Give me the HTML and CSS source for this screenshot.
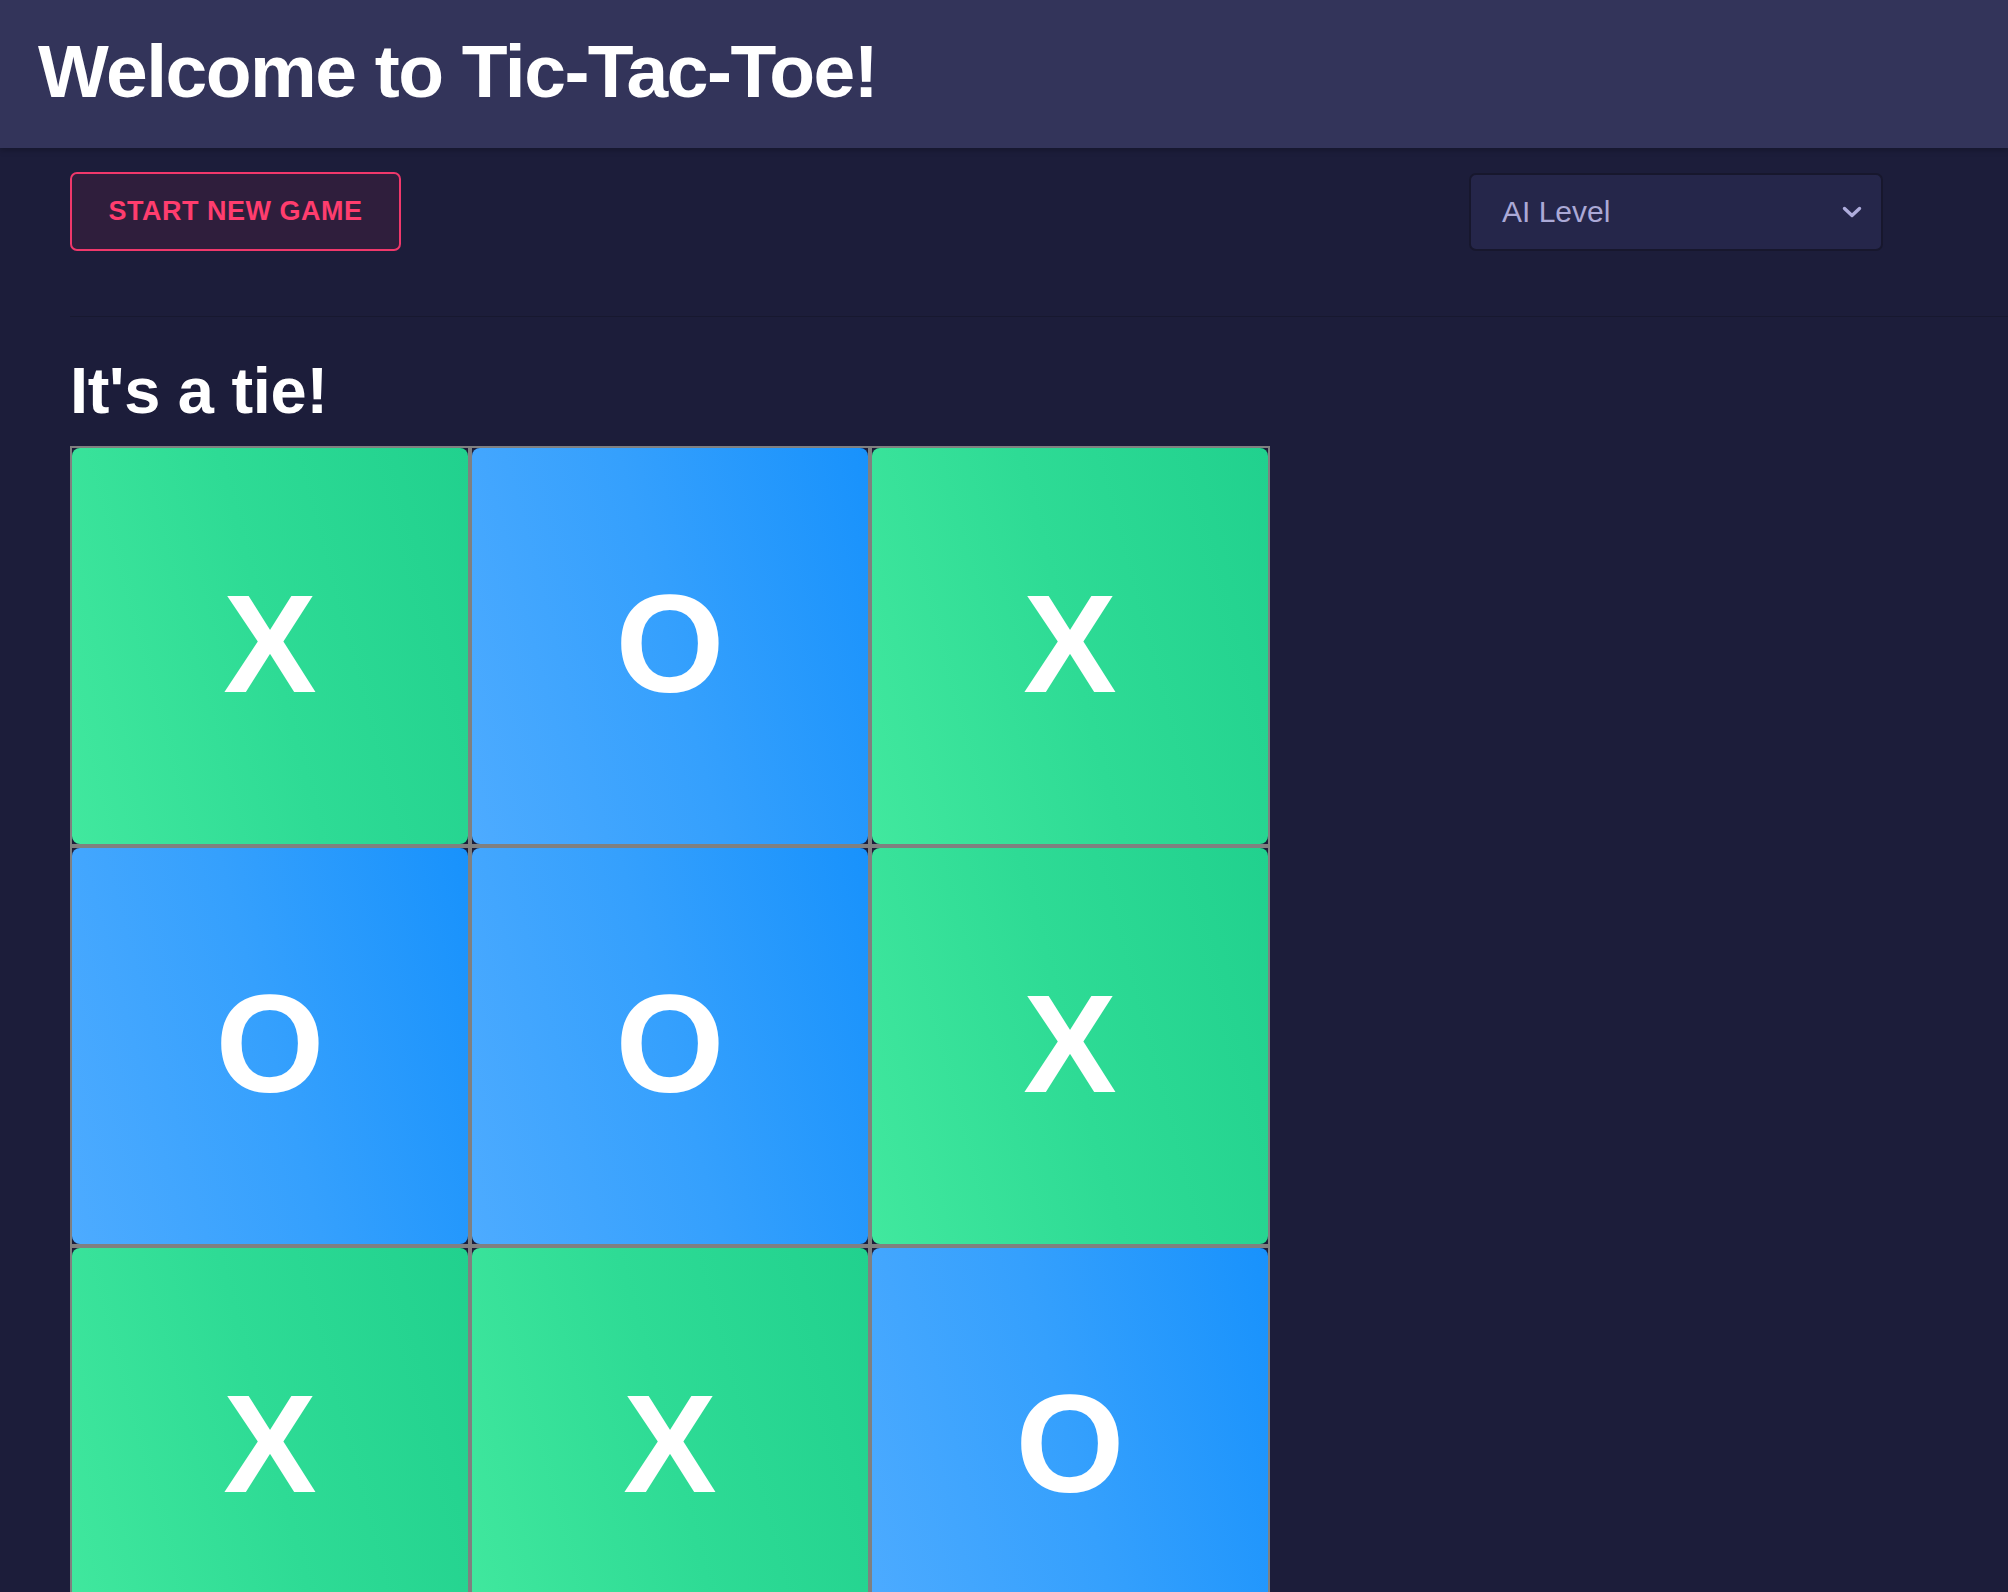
FILE: index.html
```html
<!DOCTYPE html>
<html lang="en">
<head>
<meta charset="utf-8">
<title>Tic-Tac-Toe</title>
<link rel="stylesheet" href="styles.css">
</head>
<body>
<header class="app-header">
  <h1 class="app-title">Welcome to Tic-Tac-Toe!</h1>
</header>
<div class="toolbar">
  <button class="new-game-btn" type="button">START NEW GAME</button>
  <div class="level-select">
    <span class="level-label">AI Level</span>
    <svg class="chevron" width="20" height="12" viewBox="0 0 20 12" aria-hidden="true">
      <path d="M2.5 2.5 L10 9.5 L17.5 2.5" fill="none" stroke="#aeacdc" stroke-width="3.4" stroke-linecap="round" stroke-linejoin="round"/>
    </svg>
  </div>
</div>
<main class="game">
  <h2 class="status">It's a tie!</h2>
  <div class="board">
    <div class="cell"><div class="mark mark-x">X</div></div>
    <div class="cell"><div class="mark mark-o">O</div></div>
    <div class="cell"><div class="mark mark-x">X</div></div>
    <div class="cell"><div class="mark mark-o">O</div></div>
    <div class="cell"><div class="mark mark-o">O</div></div>
    <div class="cell"><div class="mark mark-x">X</div></div>
    <div class="cell"><div class="mark mark-x">X</div></div>
    <div class="cell"><div class="mark mark-x">X</div></div>
    <div class="cell"><div class="mark mark-o">O</div></div>
  </div>
</main>
</body>
</html>
```

FILE: styles.css
```css
html, body {
  margin: 0;
  padding: 0;
  height: 100%;
  overflow: hidden;
}

body {
  background: #1c1d3a;
  font-family: "Liberation Sans", Arial, sans-serif;
  color: #ffffff;
}

.app-header {
  height: 148px;
  box-sizing: border-box;
  background: #33345a;
  display: flex;
  align-items: center;
  padding: 0 0 6px 38px;
  box-shadow: 0 2px 6px rgba(0, 0, 0, 0.25);
  position: relative;
  z-index: 1;
}

.app-title {
  margin: 0;
  font-size: 75px;
  line-height: 75px;
  font-weight: 700;
  letter-spacing: -1.5px;
  color: #ffffff;
}

.toolbar {
  margin-left: 70px;
  padding: 24px 125px 65px 0;
  display: flex;
  justify-content: space-between;
  align-items: flex-start;
  border-bottom: 1px solid #17182f;
}

.new-game-btn {
  width: 331px;
  height: 79px;
  box-sizing: border-box;
  border: 2px solid #f0386b;
  border-radius: 7px;
  background: #2f1e3c;
  color: #ff3d6e;
  font-family: "Liberation Sans", Arial, sans-serif;
  font-weight: 700;
  font-size: 27px;
  letter-spacing: 0.5px;
  padding: 0;
  cursor: pointer;
}

.level-select {
  margin-top: 1px;
  width: 414px;
  height: 78px;
  box-sizing: border-box;
  border: 2px solid #17172d;
  border-radius: 7px;
  background: #25264a;
  display: flex;
  align-items: center;
  justify-content: space-between;
  padding: 0 19px 0 31px;
}

.level-label {
  font-size: 30px;
  color: #aba9d6;
}

.chevron {
  display: block;
}

.game {
  padding-left: 70px;
}

.status {
  margin: 41px 0 23px;
  font-size: 65px;
  line-height: 65px;
  font-weight: 700;
  letter-spacing: -0.3px;
  color: #ffffff;
}

.board {
  display: grid;
  grid-template-columns: repeat(3, 400px);
  grid-auto-rows: 400px;
  width: 1200px;
}

.cell {
  border: 2px solid #808080;
  background: #1c1d3a;
  display: flex;
}

.mark {
  flex: 1;
  border-radius: 8px;
  display: flex;
  align-items: center;
  justify-content: center;
  font-size: 140px;
  font-weight: 700;
  color: #ffffff;
  line-height: 1;
  padding-bottom: 4px;
}

.mark-x {
  background: linear-gradient(75deg, #41e89e 0%, #2edb95 50%, #21d18e 100%);
}

.mark-o {
  background: linear-gradient(75deg, #4dabff 0%, #35a0fd 50%, #1892fc 100%);
}
```
